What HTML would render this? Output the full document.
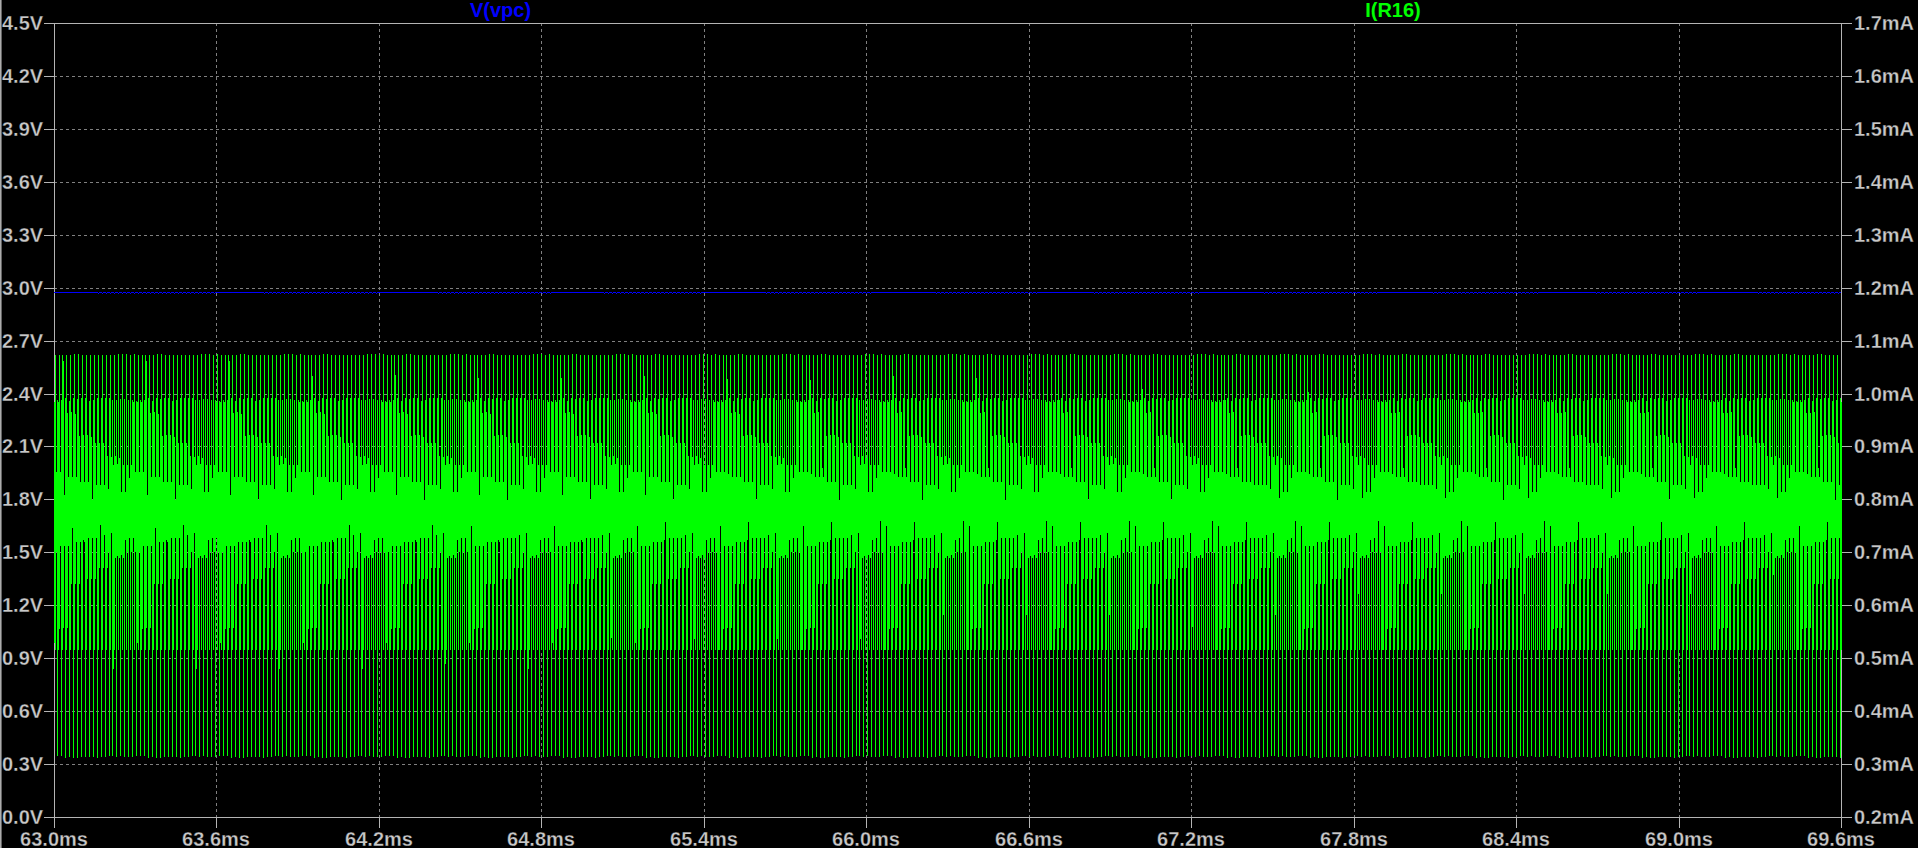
<!DOCTYPE html>
<html><head><meta charset="utf-8"><title>LTspice plot</title>
<style>
html,body{margin:0;padding:0;background:#000;overflow:hidden}
svg{display:block}
text{font-family:"Liberation Sans",Arial,sans-serif;font-size:20px}
.l{fill:#c8c8c8;font-weight:bold;stroke:#000;stroke-width:.3px}
.b{font-weight:bold}
</style></head><body>
<svg width="1919" height="848" viewBox="0 0 1919 848">
<rect width="1919" height="848" fill="#000"/>
<rect x="0" y="0" width="1" height="848" fill="#acacac"/>
<rect x="1" y="0" width="1" height="848" fill="#646464"/>
<rect x="1918" y="0" width="1" height="848" fill="#fff"/>
<g shape-rendering="crispEdges" fill="none">
<path d="M54 76.5H1841M54 129.5H1841M54 182.5H1841M54 235.5H1841M54 288.5H1841M54 341.5H1841M54 394.5H1841M54 446.5H1841M54 499.5H1841M54 552.5H1841M54 605.5H1841M54 658.5H1841M54 711.5H1841M54 764.5H1841" stroke="#808080" stroke-width="1" stroke-dasharray="3 3"/>
<path d="M216.5 23V817M379.5 23V817M541.5 23V817M704.5 23V817M866.5 23V817M1029.5 23V817M1191.5 23V817M1354.5 23V817M1516.5 23V817M1679.5 23V817" stroke="#808080" stroke-width="1" stroke-dasharray="3 3"/>
<path d="M54.5 23V828M1841.5 23V828M44 23.5H1852M44 817.5H1852M44 76.5H54M1841 76.5H1852M44 129.5H54M1841 129.5H1852M44 182.5H54M1841 182.5H1852M44 235.5H54M1841 235.5H1852M44 288.5H54M1841 288.5H1852M44 341.5H54M1841 341.5H1852M44 394.5H54M1841 394.5H1852M44 446.5H54M1841 446.5H1852M44 499.5H54M1841 499.5H1852M44 552.5H54M1841 552.5H1852M44 605.5H54M1841 605.5H1852M44 658.5H54M1841 658.5H1852M44 711.5H54M1841 711.5H1852M44 764.5H54M1841 764.5H1852M216.5 817V828M379.5 817V828M541.5 817V828M704.5 817V828M866.5 817V828M1029.5 817V828M1191.5 817V828M1354.5 817V828M1516.5 817V828M1679.5 817V828" stroke="#b4b4b4" stroke-width="1"/>
<path d="M54 292.5H98M99 292.5H102M103 292.5H106M107 292.5H110M111 292.5H114M115 292.5H118M119 292.5H122M123 292.5H126M127 292.5H130M131 292.5H134M135 292.5H138M139 292.5H142M143 292.5H146M147 292.5H150M151 292.5H154M155 292.5H158M159 292.5H162M163 292.5H166M167 292.5H170M171 292.5H174M175 292.5H178M179 292.5H182M183 292.5H186M187 292.5H190M191 292.5H194M195 292.5H198M199 292.5H202M203 292.5H206M207 292.5H210M211 292.5H214M215 292.5H264M265 292.5H268M269 292.5H272M273 292.5H276M277 292.5H280M281 292.5H284M285 292.5H288M289 292.5H292M293 292.5H296M297 292.5H300M301 292.5H304M305 292.5H308M309 292.5H312M313 292.5H316M317 292.5H320M321 292.5H324M325 292.5H328M329 292.5H332M333 292.5H336M337 292.5H340M341 292.5H344M345 292.5H348M349 292.5H352M353 292.5H356M357 292.5H360M361 292.5H364M365 292.5H368M369 292.5H372M373 292.5H376M377 292.5H438M439 292.5H442M443 292.5H446M447 292.5H450M451 292.5H454M455 292.5H458M459 292.5H462M463 292.5H466M467 292.5H470M471 292.5H474M475 292.5H478M479 292.5H482M483 292.5H486M487 292.5H490M491 292.5H494M495 292.5H498M499 292.5H502M503 292.5H506M507 292.5H510M511 292.5H514M515 292.5H518M519 292.5H522M523 292.5H526M527 292.5H530M531 292.5H534M535 292.5H538M539 292.5H542M543 292.5H546M547 292.5H550M551 292.5H604M605 292.5H608M609 292.5H612M613 292.5H616M617 292.5H620M621 292.5H624M625 292.5H628M629 292.5H632M633 292.5H636M637 292.5H640M641 292.5H644M645 292.5H648M649 292.5H652M653 292.5H656M657 292.5H660M661 292.5H664M665 292.5H668M669 292.5H672M673 292.5H676M677 292.5H680M681 292.5H684M685 292.5H688M689 292.5H692M693 292.5H696M697 292.5H700M701 292.5H766M767 292.5H770M771 292.5H774M775 292.5H778M779 292.5H782M783 292.5H786M787 292.5H790M791 292.5H794M795 292.5H798M799 292.5H802M803 292.5H806M807 292.5H810M811 292.5H814M815 292.5H818M819 292.5H822M823 292.5H826M827 292.5H830M831 292.5H834M835 292.5H838M839 292.5H842M843 292.5H846M847 292.5H850M851 292.5H854M855 292.5H858M859 292.5H862M863 292.5H866M867 292.5H870M871 292.5H936M937 292.5H940M941 292.5H944M945 292.5H948M949 292.5H952M953 292.5H956M957 292.5H960M961 292.5H964M965 292.5H968M969 292.5H972M973 292.5H976M977 292.5H980M981 292.5H984M985 292.5H988M989 292.5H992M993 292.5H996M997 292.5H1000M1001 292.5H1004M1005 292.5H1008M1009 292.5H1012M1013 292.5H1016M1017 292.5H1020M1021 292.5H1024M1025 292.5H1028M1029 292.5H1032M1033 292.5H1036M1037 292.5H1094M1095 292.5H1098M1099 292.5H1102M1103 292.5H1106M1107 292.5H1110M1111 292.5H1114M1115 292.5H1118M1119 292.5H1122M1123 292.5H1126M1127 292.5H1130M1131 292.5H1134M1135 292.5H1138M1139 292.5H1142M1143 292.5H1146M1147 292.5H1150M1151 292.5H1154M1155 292.5H1158M1159 292.5H1162M1163 292.5H1166M1167 292.5H1170M1171 292.5H1174M1175 292.5H1178M1179 292.5H1182M1183 292.5H1186M1187 292.5H1190M1191 292.5H1194M1195 292.5H1198M1199 292.5H1264M1265 292.5H1268M1269 292.5H1272M1273 292.5H1276M1277 292.5H1280M1281 292.5H1284M1285 292.5H1288M1289 292.5H1292M1293 292.5H1296M1297 292.5H1300M1301 292.5H1304M1305 292.5H1308M1309 292.5H1312M1313 292.5H1316M1317 292.5H1320M1321 292.5H1324M1325 292.5H1328M1329 292.5H1332M1333 292.5H1336M1337 292.5H1340M1341 292.5H1344M1345 292.5H1348M1349 292.5H1352M1353 292.5H1356M1357 292.5H1360M1361 292.5H1364M1365 292.5H1368M1369 292.5H1372M1373 292.5H1376M1377 292.5H1433M1434 292.5H1437M1438 292.5H1441M1442 292.5H1445M1446 292.5H1449M1450 292.5H1453M1454 292.5H1457M1458 292.5H1461M1462 292.5H1465M1466 292.5H1469M1470 292.5H1473M1474 292.5H1477M1478 292.5H1481M1482 292.5H1485M1486 292.5H1489M1490 292.5H1493M1494 292.5H1497M1498 292.5H1501M1502 292.5H1505M1506 292.5H1509M1510 292.5H1513M1514 292.5H1517M1518 292.5H1521M1522 292.5H1525M1526 292.5H1529M1530 292.5H1533M1534 292.5H1537M1538 292.5H1596M1597 292.5H1600M1601 292.5H1604M1605 292.5H1608M1609 292.5H1612M1613 292.5H1616M1617 292.5H1620M1621 292.5H1624M1625 292.5H1628M1629 292.5H1632M1633 292.5H1636M1637 292.5H1640M1641 292.5H1644M1645 292.5H1648M1649 292.5H1652M1653 292.5H1656M1657 292.5H1660M1661 292.5H1664M1665 292.5H1668M1669 292.5H1672M1673 292.5H1676M1677 292.5H1680M1681 292.5H1684M1685 292.5H1688M1689 292.5H1692M1693 292.5H1696M1697 292.5H1758M1759 292.5H1762M1763 292.5H1766M1767 292.5H1770M1771 292.5H1774M1775 292.5H1778M1779 292.5H1782M1783 292.5H1786M1787 292.5H1790M1791 292.5H1794M1795 292.5H1798M1799 292.5H1802M1803 292.5H1806M1807 292.5H1810M1811 292.5H1814M1815 292.5H1818M1819 292.5H1822M1823 292.5H1826M1827 292.5H1830M1831 292.5H1834M1835 292.5H1838M1839 292.5H1841" stroke="#00f"/>
<path d="M98 293.5h1M102 293.5h1M106 293.5h1M110 293.5h1M114 293.5h1M118 293.5h1M122 293.5h1M126 293.5h1M130 293.5h1M134 293.5h1M138 293.5h1M142 293.5h1M146 293.5h1M150 293.5h1M154 293.5h1M158 293.5h1M162 293.5h1M166 293.5h1M170 293.5h1M174 293.5h1M178 293.5h1M182 293.5h1M186 293.5h1M190 293.5h1M194 293.5h1M198 293.5h1M202 293.5h1M206 293.5h1M210 293.5h1M214 293.5h1M264 293.5h1M268 293.5h1M272 293.5h1M276 293.5h1M280 293.5h1M284 293.5h1M288 293.5h1M292 293.5h1M296 293.5h1M300 293.5h1M304 293.5h1M308 293.5h1M312 293.5h1M316 293.5h1M320 293.5h1M324 293.5h1M328 293.5h1M332 293.5h1M336 293.5h1M340 293.5h1M344 293.5h1M348 293.5h1M352 293.5h1M356 293.5h1M360 293.5h1M364 293.5h1M368 293.5h1M372 293.5h1M376 293.5h1M438 293.5h1M442 293.5h1M446 293.5h1M450 293.5h1M454 293.5h1M458 293.5h1M462 293.5h1M466 293.5h1M470 293.5h1M474 293.5h1M478 293.5h1M482 293.5h1M486 293.5h1M490 293.5h1M494 293.5h1M498 293.5h1M502 293.5h1M506 293.5h1M510 293.5h1M514 293.5h1M518 293.5h1M522 293.5h1M526 293.5h1M530 293.5h1M534 293.5h1M538 293.5h1M542 293.5h1M546 293.5h1M550 293.5h1M604 293.5h1M608 293.5h1M612 293.5h1M616 293.5h1M620 293.5h1M624 293.5h1M628 293.5h1M632 293.5h1M636 293.5h1M640 293.5h1M644 293.5h1M648 293.5h1M652 293.5h1M656 293.5h1M660 293.5h1M664 293.5h1M668 293.5h1M672 293.5h1M676 293.5h1M680 293.5h1M684 293.5h1M688 293.5h1M692 293.5h1M696 293.5h1M700 293.5h1M766 293.5h1M770 293.5h1M774 293.5h1M778 293.5h1M782 293.5h1M786 293.5h1M790 293.5h1M794 293.5h1M798 293.5h1M802 293.5h1M806 293.5h1M810 293.5h1M814 293.5h1M818 293.5h1M822 293.5h1M826 293.5h1M830 293.5h1M834 293.5h1M838 293.5h1M842 293.5h1M846 293.5h1M850 293.5h1M854 293.5h1M858 293.5h1M862 293.5h1M866 293.5h1M870 293.5h1M936 293.5h1M940 293.5h1M944 293.5h1M948 293.5h1M952 293.5h1M956 293.5h1M960 293.5h1M964 293.5h1M968 293.5h1M972 293.5h1M976 293.5h1M980 293.5h1M984 293.5h1M988 293.5h1M992 293.5h1M996 293.5h1M1000 293.5h1M1004 293.5h1M1008 293.5h1M1012 293.5h1M1016 293.5h1M1020 293.5h1M1024 293.5h1M1028 293.5h1M1032 293.5h1M1036 293.5h1M1094 293.5h1M1098 293.5h1M1102 293.5h1M1106 293.5h1M1110 293.5h1M1114 293.5h1M1118 293.5h1M1122 293.5h1M1126 293.5h1M1130 293.5h1M1134 293.5h1M1138 293.5h1M1142 293.5h1M1146 293.5h1M1150 293.5h1M1154 293.5h1M1158 293.5h1M1162 293.5h1M1166 293.5h1M1170 293.5h1M1174 293.5h1M1178 293.5h1M1182 293.5h1M1186 293.5h1M1190 293.5h1M1194 293.5h1M1198 293.5h1M1264 293.5h1M1268 293.5h1M1272 293.5h1M1276 293.5h1M1280 293.5h1M1284 293.5h1M1288 293.5h1M1292 293.5h1M1296 293.5h1M1300 293.5h1M1304 293.5h1M1308 293.5h1M1312 293.5h1M1316 293.5h1M1320 293.5h1M1324 293.5h1M1328 293.5h1M1332 293.5h1M1336 293.5h1M1340 293.5h1M1344 293.5h1M1348 293.5h1M1352 293.5h1M1356 293.5h1M1360 293.5h1M1364 293.5h1M1368 293.5h1M1372 293.5h1M1376 293.5h1M1433 293.5h1M1437 293.5h1M1441 293.5h1M1445 293.5h1M1449 293.5h1M1453 293.5h1M1457 293.5h1M1461 293.5h1M1465 293.5h1M1469 293.5h1M1473 293.5h1M1477 293.5h1M1481 293.5h1M1485 293.5h1M1489 293.5h1M1493 293.5h1M1497 293.5h1M1501 293.5h1M1505 293.5h1M1509 293.5h1M1513 293.5h1M1517 293.5h1M1521 293.5h1M1525 293.5h1M1529 293.5h1M1533 293.5h1M1537 293.5h1M1596 293.5h1M1600 293.5h1M1604 293.5h1M1608 293.5h1M1612 293.5h1M1616 293.5h1M1620 293.5h1M1624 293.5h1M1628 293.5h1M1632 293.5h1M1636 293.5h1M1640 293.5h1M1644 293.5h1M1648 293.5h1M1652 293.5h1M1656 293.5h1M1660 293.5h1M1664 293.5h1M1668 293.5h1M1672 293.5h1M1676 293.5h1M1680 293.5h1M1684 293.5h1M1688 293.5h1M1692 293.5h1M1696 293.5h1M1758 293.5h1M1762 293.5h1M1766 293.5h1M1770 293.5h1M1774 293.5h1M1778 293.5h1M1782 293.5h1M1786 293.5h1M1790 293.5h1M1794 293.5h1M1798 293.5h1M1802 293.5h1M1806 293.5h1M1810 293.5h1M1814 293.5h1M1818 293.5h1M1822 293.5h1M1826 293.5h1M1830 293.5h1M1834 293.5h1M1838 293.5h1" stroke="#00f"/>
<path d="M54.5 402V643M55.5 355V650M56.5 472V552M57.5 400V756M58.5 402V650M59.5 355V629M60.5 472V546M61.5 400V756M62.5 355V650M63.5 361V628M64.5 495V546M65.5 398V758M66.5 355V650M67.5 413V628M68.5 477V546M69.5 401V757M70.5 355V650M71.5 412V584M72.5 477V528M73.5 398V758M74.5 354V650M75.5 414V584M76.5 477V542M77.5 399V758M78.5 354V650M79.5 436V584M80.5 482V542M81.5 398V757M82.5 355V650M83.5 435V540M84.5 482V542M85.5 398V757M86.5 355V650M87.5 435V579M88.5 482V538M89.5 401V757M90.5 355V650M91.5 437V579M92.5 500V538M93.5 400V757M94.5 355V650M95.5 443V579M96.5 485V538M97.5 398V758M98.5 355V650M99.5 443V568M100.5 485V525M101.5 398V757M102.5 355V650M103.5 443V568M104.5 485V535M105.5 398V757M106.5 355V650M107.5 456V568M108.5 489V552M109.5 398V756M110.5 355V650M111.5 457V533M112.5 400V756M113.5 465V669M114.5 355V650M115.5 456V558M116.5 400V757M117.5 464V556M118.5 354V650M119.5 458V558M120.5 399V756M121.5 492V555M122.5 354V650M123.5 465V558M124.5 399V757M125.5 492V540M126.5 354V650M127.5 465V552M128.5 400V757M129.5 478V538M130.5 355V650M131.5 465V552M132.5 400V757M133.5 402V538M134.5 354V650M135.5 472V552M136.5 401V756M137.5 402V643M138.5 355V650M139.5 472V552M140.5 400V756M141.5 402V650M142.5 355V629M143.5 472V546M144.5 400V756M145.5 355V650M146.5 361V628M147.5 495V546M148.5 398V758M149.5 355V650M150.5 413V628M151.5 477V546M152.5 401V757M153.5 355V650M154.5 412V584M155.5 477V528M156.5 398V758M157.5 354V650M158.5 414V584M159.5 477V542M160.5 399V758M161.5 354V650M162.5 436V584M163.5 482V542M164.5 398V757M165.5 355V650M166.5 435V540M167.5 482V542M168.5 398V757M169.5 355V650M170.5 435V579M171.5 482V538M172.5 401V757M173.5 355V650M174.5 437V579M175.5 500V538M176.5 400V757M177.5 355V650M178.5 443V579M179.5 485V538M180.5 398V758M181.5 355V650M182.5 443V568M183.5 485V525M184.5 398V757M185.5 355V650M186.5 443V568M187.5 485V535M188.5 398V757M189.5 355V650M190.5 456V568M191.5 489V552M192.5 398V756M193.5 355V650M194.5 457V533M195.5 400V756M196.5 465V669M197.5 355V650M198.5 456V558M199.5 400V757M200.5 464V556M201.5 354V650M202.5 458V558M203.5 399V756M204.5 492V555M205.5 354V650M206.5 465V558M207.5 399V757M208.5 492V540M209.5 354V650M210.5 465V552M211.5 400V757M212.5 478V538M213.5 355V650M214.5 465V552M215.5 400V757M216.5 402V538M217.5 354V650M218.5 472V552M219.5 401V756M220.5 402V643M221.5 355V650M222.5 472V552M223.5 400V756M224.5 402V650M225.5 355V629M226.5 472V546M227.5 400V756M228.5 355V650M229.5 361V628M230.5 495V546M231.5 398V758M232.5 355V650M233.5 413V628M234.5 477V546M235.5 401V757M236.5 355V650M237.5 412V584M238.5 477V542M239.5 398V758M240.5 354V650M241.5 414V584M242.5 477V542M243.5 399V758M244.5 354V650M245.5 436V584M246.5 482V542M247.5 398V757M248.5 355V650M249.5 435V540M250.5 482V542M251.5 398V757M252.5 355V650M253.5 435V579M254.5 482V538M255.5 401V757M256.5 355V650M257.5 437V579M258.5 500V538M259.5 400V757M260.5 355V650M261.5 443V579M262.5 485V538M263.5 398V758M264.5 355V650M265.5 443V568M266.5 485V525M267.5 398V757M268.5 355V650M269.5 443V568M270.5 485V535M271.5 398V757M272.5 355V650M273.5 456V568M274.5 489V552M275.5 398V756M276.5 355V650M277.5 457V533M278.5 400V756M279.5 465V669M280.5 355V650M281.5 456V558M282.5 400V757M283.5 464V556M284.5 354V650M285.5 458V558M286.5 399V756M287.5 492V555M288.5 354V650M289.5 465V558M290.5 399V757M291.5 492V540M292.5 354V650M293.5 465V552M294.5 400V757M295.5 478V538M296.5 355V650M297.5 465V552M298.5 400V757M299.5 402V538M300.5 354V650M301.5 472V552M302.5 401V756M303.5 402V643M304.5 355V650M305.5 472V552M306.5 400V756M307.5 402V650M308.5 355V629M309.5 472V546M310.5 400V756M311.5 355V650M312.5 376V628M313.5 495V546M314.5 398V758M315.5 355V650M316.5 413V628M317.5 477V546M318.5 401V757M319.5 355V650M320.5 412V584M321.5 477V542M322.5 398V758M323.5 354V650M324.5 414V584M325.5 477V542M326.5 399V758M327.5 354V650M328.5 436V584M329.5 482V542M330.5 398V757M331.5 355V650M332.5 435V540M333.5 482V542M334.5 398V757M335.5 355V650M336.5 435V579M337.5 482V538M338.5 401V757M339.5 355V650M340.5 437V579M341.5 500V538M342.5 400V757M343.5 355V650M344.5 443V579M345.5 485V538M346.5 398V758M347.5 355V650M348.5 443V568M349.5 485V525M350.5 398V757M351.5 355V650M352.5 443V568M353.5 485V535M354.5 398V757M355.5 355V650M356.5 456V568M357.5 489V552M358.5 398V756M359.5 355V650M360.5 457V533M361.5 400V756M362.5 465V669M363.5 355V650M364.5 456V558M365.5 400V757M366.5 464V556M367.5 354V650M368.5 458V558M369.5 399V756M370.5 492V555M371.5 354V650M372.5 465V558M373.5 399V757M374.5 492V540M375.5 354V650M376.5 465V552M377.5 400V757M378.5 478V538M379.5 355V650M380.5 465V552M381.5 400V757M382.5 402V538M383.5 354V650M384.5 472V552M385.5 401V756M386.5 402V643M387.5 355V650M388.5 472V552M389.5 400V756M390.5 402V650M391.5 355V629M392.5 472V546M393.5 400V756M394.5 355V650M395.5 375V628M396.5 495V546M397.5 398V758M398.5 355V650M399.5 413V628M400.5 477V546M401.5 401V757M402.5 355V650M403.5 412V584M404.5 477V542M405.5 398V758M406.5 354V650M407.5 414V584M408.5 477V542M409.5 399V758M410.5 354V650M411.5 436V584M412.5 482V542M413.5 398V757M414.5 355V650M415.5 435V540M416.5 482V542M417.5 398V757M418.5 355V650M419.5 435V579M420.5 482V538M421.5 401V757M422.5 355V650M423.5 437V579M424.5 500V538M425.5 400V757M426.5 355V650M427.5 443V579M428.5 485V538M429.5 398V758M430.5 355V650M431.5 443V568M432.5 485V525M433.5 398V757M434.5 355V650M435.5 443V568M436.5 485V535M437.5 398V757M438.5 355V650M439.5 456V568M440.5 489V552M441.5 398V756M442.5 355V650M443.5 457V533M444.5 400V756M445.5 465V664M446.5 355V650M447.5 456V558M448.5 400V757M449.5 464V556M450.5 354V650M451.5 458V558M452.5 399V756M453.5 492V555M454.5 354V650M455.5 465V558M456.5 399V757M457.5 492V540M458.5 354V650M459.5 465V552M460.5 400V757M461.5 478V538M462.5 355V650M463.5 465V552M464.5 400V757M465.5 402V538M466.5 354V650M467.5 472V552M468.5 401V756M469.5 402V643M470.5 355V650M471.5 472V526M472.5 400V756M473.5 402V650M474.5 355V629M475.5 472V546M476.5 400V756M477.5 355V650M478.5 378V628M479.5 495V546M480.5 398V758M481.5 355V650M482.5 413V628M483.5 477V546M484.5 401V757M485.5 355V650M486.5 412V584M487.5 477V542M488.5 398V758M489.5 354V650M490.5 414V584M491.5 477V542M492.5 399V758M493.5 354V650M494.5 436V584M495.5 482V542M496.5 398V757M497.5 355V650M498.5 435V540M499.5 482V542M500.5 398V757M501.5 355V650M502.5 435V579M503.5 482V538M504.5 401V757M505.5 355V650M506.5 437V579M507.5 500V538M508.5 400V757M509.5 355V650M510.5 443V579M511.5 485V538M512.5 398V758M513.5 355V650M514.5 443V568M515.5 485V538M516.5 398V757M517.5 355V650M518.5 443V568M519.5 485V535M520.5 398V757M521.5 355V650M522.5 456V568M523.5 489V552M524.5 398V756M525.5 355V650M526.5 457V533M527.5 400V756M528.5 465V669M529.5 355V650M530.5 456V558M531.5 400V757M532.5 464V556M533.5 354V650M534.5 458V558M535.5 399V756M536.5 492V555M537.5 354V650M538.5 465V558M539.5 399V757M540.5 492V540M541.5 354V650M542.5 465V552M543.5 400V757M544.5 478V538M545.5 355V650M546.5 465V552M547.5 400V757M548.5 402V538M549.5 354V650M550.5 472V552M551.5 401V756M552.5 402V643M553.5 355V650M554.5 472V526M555.5 400V756M556.5 402V650M557.5 355V629M558.5 472V546M559.5 400V756M560.5 355V650M561.5 378V628M562.5 495V546M563.5 398V758M564.5 355V650M565.5 413V628M566.5 477V546M567.5 401V757M568.5 355V650M569.5 412V584M570.5 477V542M571.5 398V758M572.5 354V650M573.5 414V584M574.5 477V542M575.5 399V758M576.5 354V650M577.5 436V584M578.5 482V542M579.5 398V757M580.5 355V650M581.5 435V540M582.5 482V542M583.5 398V757M584.5 355V650M585.5 435V579M586.5 482V538M587.5 401V757M588.5 355V650M589.5 437V579M590.5 500V538M591.5 400V757M592.5 355V650M593.5 443V579M594.5 485V538M595.5 398V758M596.5 355V650M597.5 443V568M598.5 485V538M599.5 398V757M600.5 355V650M601.5 443V568M602.5 485V535M603.5 398V757M604.5 355V650M605.5 456V568M606.5 489V552M607.5 398V756M608.5 355V650M609.5 457V533M610.5 400V756M611.5 465V638M612.5 355V650M613.5 456V558M614.5 400V757M615.5 464V556M616.5 354V650M617.5 458V558M618.5 399V756M619.5 492V555M620.5 354V650M621.5 465V558M622.5 399V757M623.5 492V540M624.5 354V650M625.5 465V552M626.5 400V757M627.5 478V538M628.5 355V650M629.5 465V552M630.5 400V757M631.5 402V538M632.5 354V650M633.5 472V552M634.5 401V756M635.5 402V643M636.5 355V650M637.5 472V526M638.5 400V756M639.5 402V650M640.5 355V629M641.5 472V546M642.5 400V756M643.5 355V650M644.5 376V628M645.5 495V546M646.5 398V758M647.5 355V650M648.5 413V628M649.5 477V546M650.5 401V757M651.5 355V650M652.5 412V584M653.5 477V542M654.5 398V758M655.5 354V650M656.5 414V584M657.5 477V542M658.5 399V758M659.5 354V650M660.5 436V584M661.5 482V542M662.5 398V757M663.5 355V650M664.5 435V540M665.5 482V522M666.5 398V757M667.5 355V650M668.5 435V579M669.5 482V538M670.5 401V757M671.5 355V650M672.5 437V579M673.5 500V538M674.5 400V757M675.5 355V650M676.5 443V579M677.5 485V538M678.5 398V758M679.5 355V650M680.5 443V568M681.5 485V538M682.5 398V757M683.5 355V650M684.5 443V568M685.5 485V535M686.5 398V757M687.5 355V650M688.5 456V568M689.5 489V552M690.5 398V756M691.5 355V650M692.5 457V533M693.5 400V756M694.5 465V639M695.5 355V650M696.5 456V558M697.5 400V757M698.5 464V556M699.5 354V650M700.5 458V558M701.5 399V756M702.5 492V555M703.5 354V650M704.5 465V558M705.5 399V757M706.5 492V540M707.5 354V650M708.5 465V552M709.5 400V757M710.5 478V538M711.5 355V650M712.5 465V552M713.5 400V757M714.5 402V538M715.5 354V650M716.5 472V552M717.5 401V756M718.5 402V650M719.5 355V650M720.5 472V526M721.5 400V756M722.5 402V650M723.5 355V629M724.5 472V546M725.5 400V756M726.5 355V650M727.5 379V628M728.5 474V546M729.5 398V758M730.5 355V650M731.5 413V628M732.5 477V546M733.5 401V757M734.5 355V650M735.5 412V584M736.5 477V542M737.5 398V758M738.5 354V650M739.5 414V584M740.5 477V542M741.5 399V758M742.5 354V650M743.5 436V584M744.5 482V542M745.5 398V757M746.5 355V650M747.5 435V540M748.5 482V522M749.5 398V757M750.5 355V650M751.5 435V579M752.5 482V538M753.5 401V757M754.5 355V650M755.5 437V579M756.5 500V538M757.5 400V757M758.5 355V650M759.5 443V579M760.5 485V538M761.5 398V758M762.5 355V650M763.5 443V568M764.5 485V538M765.5 398V757M766.5 355V650M767.5 443V568M768.5 485V535M769.5 398V757M770.5 355V650M771.5 456V568M772.5 489V552M773.5 398V756M774.5 355V650M775.5 457V533M776.5 400V756M777.5 465V639M778.5 355V650M779.5 456V558M780.5 400V757M781.5 464V556M782.5 354V650M783.5 458V558M784.5 399V756M785.5 492V555M786.5 354V650M787.5 465V558M788.5 399V757M789.5 492V540M790.5 354V650M791.5 465V552M792.5 400V757M793.5 478V538M794.5 355V650M795.5 465V552M796.5 400V757M797.5 402V538M798.5 354V650M799.5 472V552M800.5 401V756M801.5 402V650M802.5 355V650M803.5 472V526M804.5 400V756M805.5 402V650M806.5 355V629M807.5 472V546M808.5 400V756M809.5 355V650M810.5 380V628M811.5 474V546M812.5 398V758M813.5 355V650M814.5 413V628M815.5 477V546M816.5 401V757M817.5 355V650M818.5 412V584M819.5 477V542M820.5 398V758M821.5 354V650M822.5 468V584M823.5 477V542M824.5 399V758M825.5 354V650M826.5 436V584M827.5 482V542M828.5 398V757M829.5 355V650M830.5 435V540M831.5 482V522M832.5 398V757M833.5 355V650M834.5 435V579M835.5 482V538M836.5 401V757M837.5 355V650M838.5 437V579M839.5 500V538M840.5 400V757M841.5 355V650M842.5 443V579M843.5 485V538M844.5 398V758M845.5 355V650M846.5 443V568M847.5 485V538M848.5 398V757M849.5 355V650M850.5 443V568M851.5 485V535M852.5 398V757M853.5 355V650M854.5 456V568M855.5 489V552M856.5 398V756M857.5 355V650M858.5 457V533M859.5 400V756M860.5 465V639M861.5 355V650M862.5 456V558M863.5 400V757M864.5 464V556M865.5 354V650M866.5 458V558M867.5 399V756M868.5 492V555M869.5 354V650M870.5 465V558M871.5 399V757M872.5 492V540M873.5 354V650M874.5 465V552M875.5 400V757M876.5 478V538M877.5 355V650M878.5 465V552M879.5 400V757M880.5 402V521M881.5 354V650M882.5 472V552M883.5 401V756M884.5 402V650M885.5 355V650M886.5 472V526M887.5 400V756M888.5 402V650M889.5 355V629M890.5 472V546M891.5 400V756M892.5 355V650M893.5 376V628M894.5 474V546M895.5 398V758M896.5 355V650M897.5 413V628M898.5 477V546M899.5 401V757M900.5 355V650M901.5 412V584M902.5 477V542M903.5 398V758M904.5 354V650M905.5 468V584M906.5 477V542M907.5 399V758M908.5 354V650M909.5 436V584M910.5 482V542M911.5 398V757M912.5 355V650M913.5 435V540M914.5 482V522M915.5 398V757M916.5 355V650M917.5 435V579M918.5 482V538M919.5 401V757M920.5 355V650M921.5 437V579M922.5 500V538M923.5 400V757M924.5 355V650M925.5 443V579M926.5 485V538M927.5 398V758M928.5 355V650M929.5 443V568M930.5 485V538M931.5 398V757M932.5 355V650M933.5 443V568M934.5 485V535M935.5 398V757M936.5 355V650M937.5 456V568M938.5 489V552M939.5 398V756M940.5 355V650M941.5 457V533M942.5 400V756M943.5 465V615M944.5 355V650M945.5 456V558M946.5 400V757M947.5 464V556M948.5 354V650M949.5 458V558M950.5 399V756M951.5 492V555M952.5 354V650M953.5 465V558M954.5 399V757M955.5 492V540M956.5 354V650M957.5 465V552M958.5 400V757M959.5 478V538M960.5 355V650M961.5 465V552M962.5 400V757M963.5 402V521M964.5 354V650M965.5 472V552M966.5 401V756M967.5 402V650M968.5 355V650M969.5 472V526M970.5 400V756M971.5 402V650M972.5 355V629M973.5 472V546M974.5 400V756M975.5 355V650M976.5 378V628M977.5 474V546M978.5 398V758M979.5 355V650M980.5 413V628M981.5 477V546M982.5 401V757M983.5 355V650M984.5 412V584M985.5 477V542M986.5 398V758M987.5 354V650M988.5 468V584M989.5 477V542M990.5 399V758M991.5 354V650M992.5 436V584M993.5 482V542M994.5 398V757M995.5 355V650M996.5 435V540M997.5 482V522M998.5 398V757M999.5 355V650M1000.5 435V579M1001.5 482V538M1002.5 401V757M1003.5 355V650M1004.5 437V579M1005.5 500V538M1006.5 400V757M1007.5 355V650M1008.5 443V579M1009.5 485V538M1010.5 398V758M1011.5 355V650M1012.5 443V568M1013.5 485V538M1014.5 398V757M1015.5 355V650M1016.5 443V568M1017.5 485V535M1018.5 398V757M1019.5 355V650M1020.5 456V568M1021.5 489V552M1022.5 398V756M1023.5 355V650M1024.5 457V533M1025.5 400V756M1026.5 465V615M1027.5 355V650M1028.5 456V558M1029.5 400V757M1030.5 464V556M1031.5 354V650M1032.5 458V558M1033.5 399V756M1034.5 492V555M1035.5 354V650M1036.5 465V558M1037.5 399V757M1038.5 492V540M1039.5 354V650M1040.5 465V552M1041.5 400V757M1042.5 478V538M1043.5 355V650M1044.5 465V552M1045.5 400V757M1046.5 402V521M1047.5 354V650M1048.5 472V552M1049.5 401V756M1050.5 402V650M1051.5 355V650M1052.5 472V526M1053.5 400V756M1054.5 402V650M1055.5 355V629M1056.5 472V546M1057.5 400V756M1058.5 355V650M1059.5 400V628M1060.5 474V546M1061.5 398V758M1062.5 355V650M1063.5 413V628M1064.5 477V546M1065.5 401V757M1066.5 355V650M1067.5 412V584M1068.5 477V542M1069.5 398V758M1070.5 354V650M1071.5 468V584M1072.5 477V542M1073.5 399V758M1074.5 354V650M1075.5 436V584M1076.5 482V542M1077.5 398V757M1078.5 355V650M1079.5 435V540M1080.5 482V522M1081.5 398V757M1082.5 355V650M1083.5 435V579M1084.5 482V538M1085.5 401V757M1086.5 355V650M1087.5 437V579M1088.5 500V538M1089.5 400V757M1090.5 355V650M1091.5 443V579M1092.5 485V538M1093.5 398V758M1094.5 355V650M1095.5 443V568M1096.5 485V538M1097.5 398V757M1098.5 355V650M1099.5 443V568M1100.5 485V535M1101.5 398V757M1102.5 355V650M1103.5 456V568M1104.5 489V552M1105.5 398V756M1106.5 355V650M1107.5 457V533M1108.5 400V756M1109.5 465V615M1110.5 355V650M1111.5 456V558M1112.5 400V757M1113.5 464V556M1114.5 354V650M1115.5 458V558M1116.5 399V756M1117.5 492V555M1118.5 354V650M1119.5 465V558M1120.5 399V757M1121.5 492V540M1122.5 354V650M1123.5 465V552M1124.5 400V757M1125.5 478V538M1126.5 355V650M1127.5 465V552M1128.5 400V757M1129.5 402V521M1130.5 354V650M1131.5 472V552M1132.5 401V756M1133.5 402V650M1134.5 355V650M1135.5 472V526M1136.5 400V756M1137.5 402V650M1138.5 355V629M1139.5 472V546M1140.5 400V756M1141.5 355V650M1142.5 389V628M1143.5 474V546M1144.5 398V758M1145.5 355V650M1146.5 413V628M1147.5 477V546M1148.5 401V757M1149.5 355V650M1150.5 412V584M1151.5 477V542M1152.5 398V758M1153.5 354V650M1154.5 468V584M1155.5 477V542M1156.5 399V758M1157.5 354V650M1158.5 436V584M1159.5 482V542M1160.5 398V757M1161.5 355V650M1162.5 435V540M1163.5 482V522M1164.5 398V757M1165.5 355V650M1166.5 435V579M1167.5 482V538M1168.5 401V757M1169.5 355V650M1170.5 437V579M1171.5 500V538M1172.5 400V757M1173.5 355V650M1174.5 443V579M1175.5 485V538M1176.5 398V758M1177.5 355V650M1178.5 443V568M1179.5 485V538M1180.5 398V757M1181.5 355V650M1182.5 443V568M1183.5 485V535M1184.5 398V757M1185.5 355V650M1186.5 456V568M1187.5 489V552M1188.5 398V756M1189.5 355V650M1190.5 457V533M1191.5 400V756M1192.5 465V627M1193.5 355V650M1194.5 456V558M1195.5 400V757M1196.5 464V556M1197.5 354V650M1198.5 458V558M1199.5 399V756M1200.5 492V555M1201.5 354V650M1202.5 465V558M1203.5 399V757M1204.5 492V540M1205.5 354V650M1206.5 465V552M1207.5 400V757M1208.5 478V538M1209.5 355V650M1210.5 465V552M1211.5 400V757M1212.5 402V521M1213.5 354V650M1214.5 472V552M1215.5 401V756M1216.5 402V650M1217.5 355V650M1218.5 472V526M1219.5 400V756M1220.5 402V650M1221.5 355V629M1222.5 472V546M1223.5 400V756M1224.5 355V650M1225.5 400V628M1226.5 474V546M1227.5 398V758M1228.5 355V650M1229.5 413V628M1230.5 477V546M1231.5 401V757M1232.5 355V650M1233.5 412V584M1234.5 477V542M1235.5 398V758M1236.5 354V650M1237.5 468V584M1238.5 477V542M1239.5 399V758M1240.5 354V650M1241.5 436V584M1242.5 482V542M1243.5 398V757M1244.5 355V650M1245.5 435V540M1246.5 482V522M1247.5 398V757M1248.5 355V650M1249.5 435V579M1250.5 482V538M1251.5 401V757M1252.5 355V650M1253.5 437V579M1254.5 485V538M1255.5 400V757M1256.5 355V650M1257.5 443V579M1258.5 485V538M1259.5 398V758M1260.5 355V650M1261.5 443V568M1262.5 485V538M1263.5 398V757M1264.5 355V650M1265.5 443V568M1266.5 485V535M1267.5 398V757M1268.5 355V650M1269.5 456V568M1270.5 489V552M1271.5 398V756M1272.5 355V650M1273.5 457V533M1274.5 400V756M1275.5 465V615M1276.5 355V650M1277.5 456V558M1278.5 400V757M1279.5 498V556M1280.5 354V650M1281.5 458V558M1282.5 399V756M1283.5 492V555M1284.5 354V650M1285.5 465V558M1286.5 399V757M1287.5 492V540M1288.5 354V650M1289.5 465V552M1290.5 400V757M1291.5 478V538M1292.5 355V650M1293.5 465V552M1294.5 400V757M1295.5 402V521M1296.5 354V650M1297.5 472V552M1298.5 401V756M1299.5 402V650M1300.5 355V650M1301.5 472V526M1302.5 400V756M1303.5 402V650M1304.5 355V629M1305.5 472V546M1306.5 400V756M1307.5 355V650M1308.5 392V628M1309.5 474V546M1310.5 398V758M1311.5 355V650M1312.5 413V628M1313.5 477V546M1314.5 401V757M1315.5 355V650M1316.5 412V584M1317.5 477V542M1318.5 398V758M1319.5 354V650M1320.5 468V584M1321.5 477V542M1322.5 399V758M1323.5 354V650M1324.5 436V584M1325.5 482V542M1326.5 398V757M1327.5 355V650M1328.5 435V540M1329.5 482V522M1330.5 398V757M1331.5 355V650M1332.5 435V579M1333.5 482V538M1334.5 401V757M1335.5 355V650M1336.5 437V579M1337.5 500V538M1338.5 400V757M1339.5 355V650M1340.5 443V579M1341.5 485V538M1342.5 398V758M1343.5 355V650M1344.5 443V568M1345.5 485V538M1346.5 398V757M1347.5 355V650M1348.5 443V568M1349.5 485V535M1350.5 398V757M1351.5 355V650M1352.5 456V568M1353.5 489V552M1354.5 398V756M1355.5 355V650M1356.5 457V533M1357.5 400V756M1358.5 465V594M1359.5 355V650M1360.5 456V558M1361.5 400V757M1362.5 498V556M1363.5 354V650M1364.5 458V558M1365.5 399V756M1366.5 492V555M1367.5 354V650M1368.5 465V558M1369.5 399V757M1370.5 492V540M1371.5 354V650M1372.5 465V552M1373.5 400V757M1374.5 478V538M1375.5 355V650M1376.5 465V552M1377.5 400V757M1378.5 402V521M1379.5 354V650M1380.5 472V552M1381.5 401V756M1382.5 402V650M1383.5 355V650M1384.5 472V526M1385.5 400V756M1386.5 402V650M1387.5 355V629M1388.5 472V546M1389.5 400V756M1390.5 355V650M1391.5 413V628M1392.5 474V546M1393.5 398V758M1394.5 355V650M1395.5 413V628M1396.5 477V546M1397.5 401V757M1398.5 355V650M1399.5 412V584M1400.5 477V542M1401.5 398V758M1402.5 354V650M1403.5 468V584M1404.5 477V542M1405.5 399V758M1406.5 354V650M1407.5 436V584M1408.5 482V542M1409.5 398V757M1410.5 355V650M1411.5 435V540M1412.5 482V522M1413.5 398V757M1414.5 355V650M1415.5 435V579M1416.5 482V538M1417.5 401V757M1418.5 355V650M1419.5 437V579M1420.5 485V538M1421.5 400V757M1422.5 355V650M1423.5 443V579M1424.5 485V538M1425.5 398V758M1426.5 355V650M1427.5 443V568M1428.5 485V538M1429.5 398V757M1430.5 355V650M1431.5 443V568M1432.5 485V535M1433.5 398V757M1434.5 355V650M1435.5 456V568M1436.5 489V552M1437.5 398V756M1438.5 355V650M1439.5 457V533M1440.5 400V756M1441.5 465V594M1442.5 355V650M1443.5 456V558M1444.5 400V757M1445.5 498V556M1446.5 354V650M1447.5 458V558M1448.5 399V756M1449.5 492V555M1450.5 354V650M1451.5 465V558M1452.5 399V757M1453.5 492V540M1454.5 354V650M1455.5 465V552M1456.5 400V757M1457.5 478V538M1458.5 355V650M1459.5 465V552M1460.5 400V757M1461.5 402V521M1462.5 354V650M1463.5 472V552M1464.5 401V756M1465.5 402V650M1466.5 355V650M1467.5 472V526M1468.5 400V756M1469.5 402V650M1470.5 355V629M1471.5 472V546M1472.5 400V756M1473.5 355V650M1474.5 413V628M1475.5 474V546M1476.5 398V758M1477.5 355V650M1478.5 413V628M1479.5 477V546M1480.5 401V757M1481.5 355V650M1482.5 412V584M1483.5 477V542M1484.5 398V758M1485.5 354V650M1486.5 468V584M1487.5 477V542M1488.5 399V758M1489.5 354V650M1490.5 436V584M1491.5 482V542M1492.5 398V757M1493.5 355V650M1494.5 435V540M1495.5 482V522M1496.5 398V757M1497.5 355V650M1498.5 435V579M1499.5 482V538M1500.5 401V757M1501.5 355V650M1502.5 437V579M1503.5 500V538M1504.5 400V757M1505.5 355V650M1506.5 443V579M1507.5 485V538M1508.5 398V758M1509.5 355V650M1510.5 443V568M1511.5 485V538M1512.5 398V757M1513.5 355V650M1514.5 443V568M1515.5 485V535M1516.5 398V757M1517.5 355V650M1518.5 456V568M1519.5 489V552M1520.5 398V756M1521.5 355V650M1522.5 457V533M1523.5 400V756M1524.5 465V594M1525.5 355V650M1526.5 456V558M1527.5 400V757M1528.5 498V556M1529.5 354V650M1530.5 458V558M1531.5 399V756M1532.5 492V555M1533.5 354V650M1534.5 465V558M1535.5 399V757M1536.5 492V540M1537.5 354V650M1538.5 465V552M1539.5 400V757M1540.5 478V538M1541.5 355V650M1542.5 465V552M1543.5 400V757M1544.5 402V521M1545.5 354V650M1546.5 472V552M1547.5 401V756M1548.5 402V650M1549.5 355V650M1550.5 472V526M1551.5 400V756M1552.5 402V650M1553.5 355V629M1554.5 472V546M1555.5 400V756M1556.5 355V650M1557.5 413V628M1558.5 474V546M1559.5 398V758M1560.5 355V650M1561.5 413V628M1562.5 477V546M1563.5 401V757M1564.5 355V650M1565.5 412V584M1566.5 477V542M1567.5 398V758M1568.5 354V650M1569.5 468V584M1570.5 477V542M1571.5 399V758M1572.5 354V650M1573.5 436V584M1574.5 482V542M1575.5 398V757M1576.5 355V650M1577.5 435V540M1578.5 482V522M1579.5 398V757M1580.5 355V650M1581.5 435V579M1582.5 482V538M1583.5 401V757M1584.5 355V650M1585.5 437V579M1586.5 485V538M1587.5 400V757M1588.5 355V650M1589.5 443V579M1590.5 485V538M1591.5 398V758M1592.5 355V650M1593.5 443V568M1594.5 485V538M1595.5 398V757M1596.5 355V650M1597.5 443V568M1598.5 485V535M1599.5 398V757M1600.5 355V650M1601.5 456V568M1602.5 489V552M1603.5 398V756M1604.5 355V650M1605.5 457V533M1606.5 400V756M1607.5 465V594M1608.5 355V650M1609.5 456V558M1610.5 400V757M1611.5 498V556M1612.5 354V650M1613.5 458V558M1614.5 399V756M1615.5 492V555M1616.5 354V650M1617.5 465V558M1618.5 399V757M1619.5 492V540M1620.5 354V650M1621.5 465V552M1622.5 400V757M1623.5 478V538M1624.5 355V650M1625.5 465V552M1626.5 400V757M1627.5 402V538M1628.5 354V650M1629.5 472V552M1630.5 401V756M1631.5 402V650M1632.5 355V650M1633.5 472V526M1634.5 400V756M1635.5 402V650M1636.5 355V629M1637.5 472V546M1638.5 400V756M1639.5 355V650M1640.5 413V628M1641.5 474V546M1642.5 398V758M1643.5 355V650M1644.5 413V628M1645.5 477V546M1646.5 401V757M1647.5 355V650M1648.5 412V584M1649.5 477V542M1650.5 398V758M1651.5 354V650M1652.5 468V584M1653.5 477V542M1654.5 399V758M1655.5 354V650M1656.5 436V584M1657.5 482V542M1658.5 398V757M1659.5 355V650M1660.5 435V540M1661.5 482V522M1662.5 398V757M1663.5 355V650M1664.5 435V579M1665.5 482V538M1666.5 401V757M1667.5 355V650M1668.5 437V579M1669.5 500V538M1670.5 400V757M1671.5 355V650M1672.5 443V579M1673.5 485V538M1674.5 398V758M1675.5 355V650M1676.5 443V568M1677.5 485V538M1678.5 398V757M1679.5 355V650M1680.5 443V568M1681.5 485V535M1682.5 398V757M1683.5 355V650M1684.5 456V568M1685.5 489V552M1686.5 398V756M1687.5 355V650M1688.5 457V533M1689.5 400V756M1690.5 465V594M1691.5 355V650M1692.5 456V558M1693.5 400V757M1694.5 498V556M1695.5 354V650M1696.5 458V558M1697.5 399V756M1698.5 492V555M1699.5 354V650M1700.5 465V558M1701.5 399V757M1702.5 492V540M1703.5 354V650M1704.5 465V552M1705.5 400V757M1706.5 478V538M1707.5 355V650M1708.5 465V552M1709.5 400V757M1710.5 402V538M1711.5 354V650M1712.5 472V552M1713.5 401V756M1714.5 402V650M1715.5 355V650M1716.5 472V526M1717.5 400V756M1718.5 402V650M1719.5 355V629M1720.5 472V546M1721.5 400V756M1722.5 355V650M1723.5 413V628M1724.5 474V546M1725.5 398V758M1726.5 355V650M1727.5 413V628M1728.5 477V546M1729.5 401V757M1730.5 355V650M1731.5 412V584M1732.5 477V542M1733.5 398V758M1734.5 354V650M1735.5 468V584M1736.5 477V542M1737.5 399V758M1738.5 354V650M1739.5 436V584M1740.5 482V542M1741.5 398V757M1742.5 355V650M1743.5 435V540M1744.5 482V522M1745.5 398V757M1746.5 355V650M1747.5 435V579M1748.5 482V538M1749.5 401V757M1750.5 355V650M1751.5 437V579M1752.5 485V538M1753.5 400V757M1754.5 355V650M1755.5 443V579M1756.5 485V538M1757.5 398V758M1758.5 355V650M1759.5 443V568M1760.5 485V538M1761.5 398V757M1762.5 355V650M1763.5 443V568M1764.5 485V535M1765.5 398V757M1766.5 355V650M1767.5 456V568M1768.5 489V552M1769.5 398V756M1770.5 355V650M1771.5 457V533M1772.5 400V756M1773.5 465V575M1774.5 355V650M1775.5 456V558M1776.5 400V757M1777.5 498V556M1778.5 354V650M1779.5 458V558M1780.5 399V756M1781.5 492V555M1782.5 354V650M1783.5 465V558M1784.5 399V757M1785.5 492V540M1786.5 354V650M1787.5 465V552M1788.5 400V757M1789.5 478V538M1790.5 355V650M1791.5 465V552M1792.5 400V757M1793.5 402V538M1794.5 354V650M1795.5 472V552M1796.5 401V756M1797.5 402V650M1798.5 355V650M1799.5 472V526M1800.5 400V756M1801.5 402V650M1802.5 355V629M1803.5 472V546M1804.5 400V756M1805.5 355V650M1806.5 413V628M1807.5 474V546M1808.5 398V758M1809.5 355V650M1810.5 413V628M1811.5 477V546M1812.5 401V757M1813.5 355V650M1814.5 412V584M1815.5 477V542M1816.5 398V758M1817.5 354V650M1818.5 468V584M1819.5 477V542M1820.5 399V758M1821.5 354V650M1822.5 436V584M1823.5 482V542M1824.5 398V757M1825.5 355V650M1826.5 435V540M1827.5 482V522M1828.5 398V757M1829.5 355V650M1830.5 435V579M1831.5 482V538M1832.5 401V757M1833.5 355V650M1834.5 437V579M1835.5 500V538M1836.5 400V757M1837.5 355V650M1838.5 443V579M1839.5 485V538M1840.5 398V758M1841.5 402V650" stroke="#0f0" stroke-width="1"/>
</g>
<text class="l" x="2" y="30">4.5V</text>
<text class="l" x="2" y="83">4.2V</text>
<text class="l" x="2" y="136">3.9V</text>
<text class="l" x="2" y="189">3.6V</text>
<text class="l" x="2" y="242">3.3V</text>
<text class="l" x="2" y="295">3.0V</text>
<text class="l" x="2" y="348">2.7V</text>
<text class="l" x="2" y="401">2.4V</text>
<text class="l" x="2" y="453">2.1V</text>
<text class="l" x="2" y="506">1.8V</text>
<text class="l" x="2" y="559">1.5V</text>
<text class="l" x="2" y="612">1.2V</text>
<text class="l" x="2" y="665">0.9V</text>
<text class="l" x="2" y="718">0.6V</text>
<text class="l" x="2" y="771">0.3V</text>
<text class="l" x="2" y="824">0.0V</text>
<text class="l" x="1854" y="30">1.7mA</text>
<text class="l" x="1854" y="83">1.6mA</text>
<text class="l" x="1854" y="136">1.5mA</text>
<text class="l" x="1854" y="189">1.4mA</text>
<text class="l" x="1854" y="242">1.3mA</text>
<text class="l" x="1854" y="295">1.2mA</text>
<text class="l" x="1854" y="348">1.1mA</text>
<text class="l" x="1854" y="401">1.0mA</text>
<text class="l" x="1854" y="453">0.9mA</text>
<text class="l" x="1854" y="506">0.8mA</text>
<text class="l" x="1854" y="559">0.7mA</text>
<text class="l" x="1854" y="612">0.6mA</text>
<text class="l" x="1854" y="665">0.5mA</text>
<text class="l" x="1854" y="718">0.4mA</text>
<text class="l" x="1854" y="771">0.3mA</text>
<text class="l" x="1854" y="824">0.2mA</text>
<text class="l" x="54" y="846" text-anchor="middle">63.0ms</text>
<text class="l" x="216" y="846" text-anchor="middle">63.6ms</text>
<text class="l" x="379" y="846" text-anchor="middle">64.2ms</text>
<text class="l" x="541" y="846" text-anchor="middle">64.8ms</text>
<text class="l" x="704" y="846" text-anchor="middle">65.4ms</text>
<text class="l" x="866" y="846" text-anchor="middle">66.0ms</text>
<text class="l" x="1029" y="846" text-anchor="middle">66.6ms</text>
<text class="l" x="1191" y="846" text-anchor="middle">67.2ms</text>
<text class="l" x="1354" y="846" text-anchor="middle">67.8ms</text>
<text class="l" x="1516" y="846" text-anchor="middle">68.4ms</text>
<text class="l" x="1679" y="846" text-anchor="middle">69.0ms</text>
<text class="l" x="1841" y="846" text-anchor="middle">69.6ms</text>
<text class="b" x="500.5" y="17" text-anchor="middle" fill="#00f">V(vpc)</text>
<text class="b" x="1393" y="17" text-anchor="middle" fill="#0f0">I(R16)</text>
</svg></body></html>
